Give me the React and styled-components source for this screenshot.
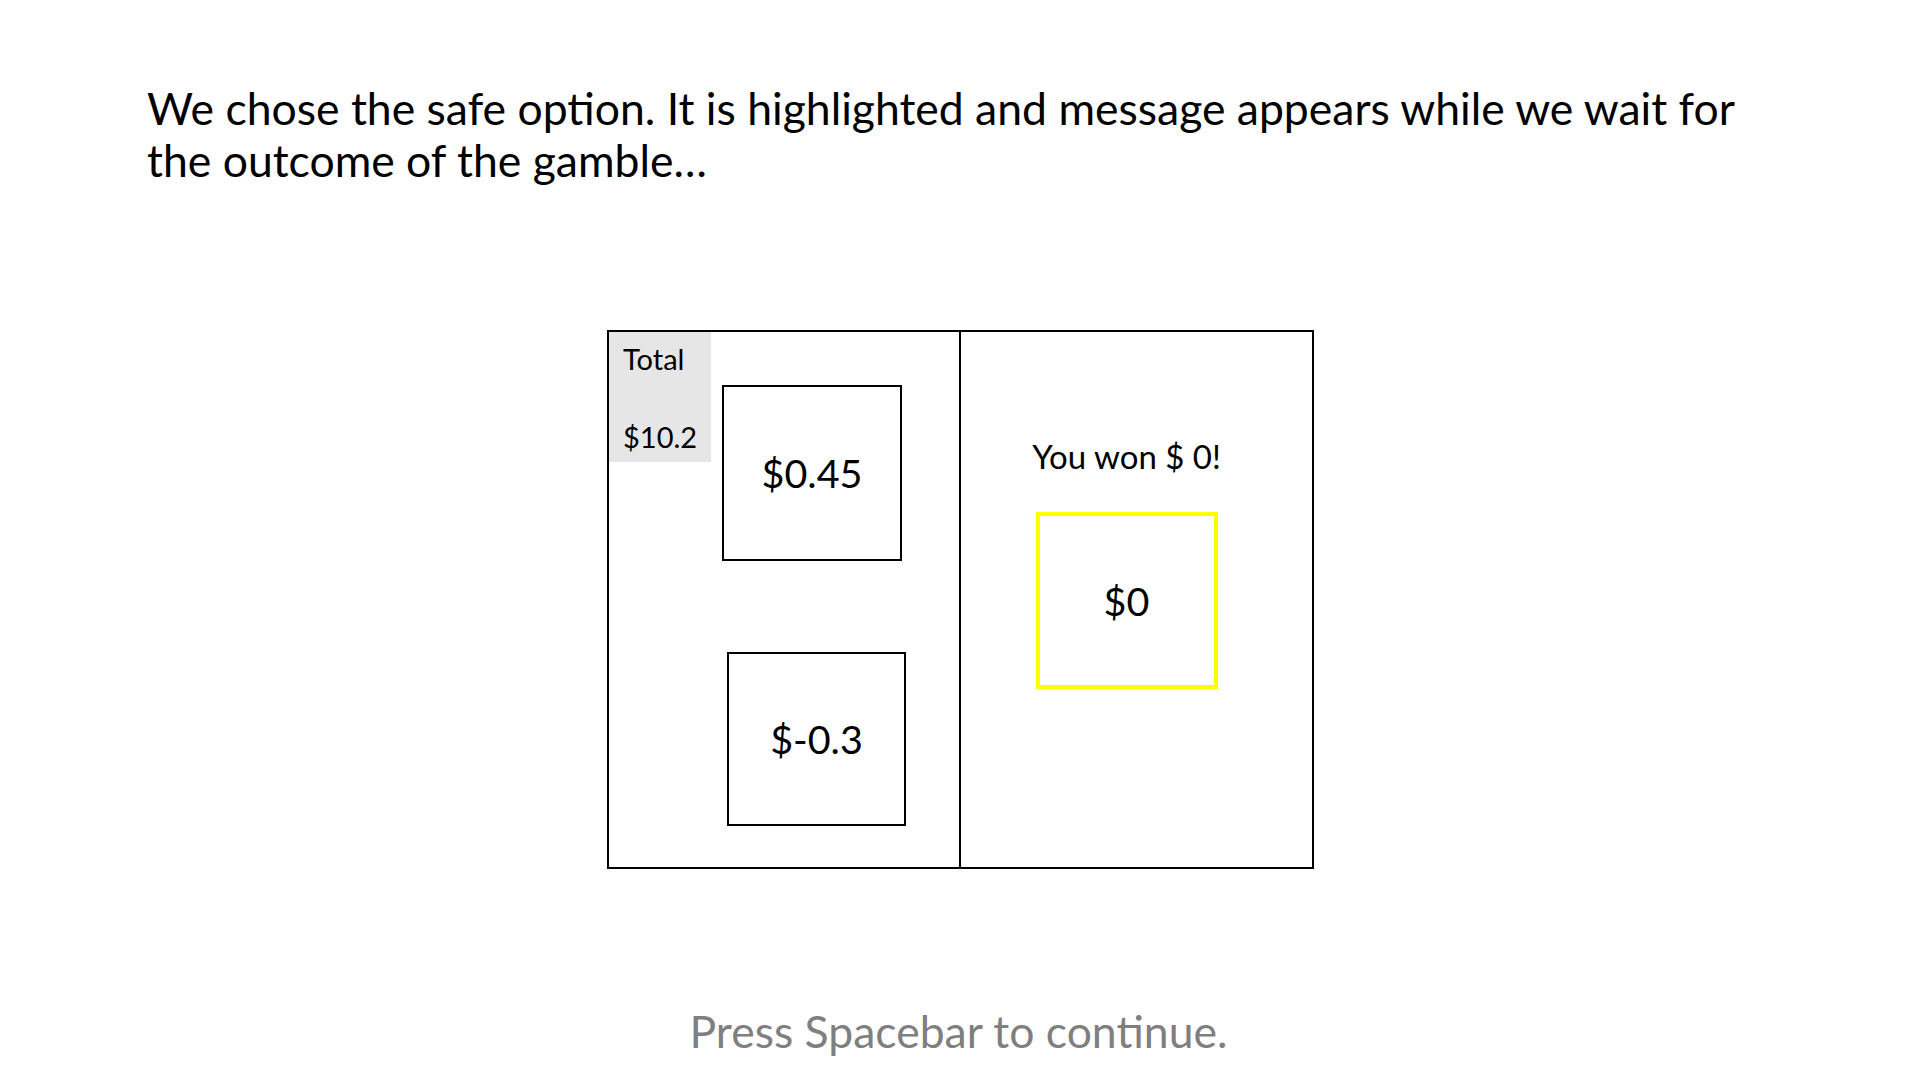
import React from 'react';
import styled, { createGlobalStyle } from 'styled-components';

const GlobalStyle = createGlobalStyle`
    html, body {
        margin: 0;
        padding: 0;
        background: #ffffff;
    }
    body {
        font-family: Lato, "Open Sans", sans-serif;
        color: #000000;
    }
`;

const Slide = styled.div`
    width: 1917px;
    height: 1072px;
    box-sizing: border-box;
    padding-top: 82px;
    overflow: hidden;
`;

const Caption = styled.p`
    margin: 0 0 0 147px;
    width: 1640px;
    font-size: 44.5px;
    line-height: 52px;
`;

const Board = styled.div`
    display: grid;
    grid-template-columns: 352px 351px;
    width: 707px;
    height: 539px;
    box-sizing: border-box;
    margin: 144px 0 0 607px;
    border: 2px solid #000000;
`;

const LeftCell = styled.div`
    display: flex;
    flex-direction: column;
    border-right: 2px solid #000000;
`;

const TopRow = styled.div`
    display: flex;
    align-items: flex-start;
`;

const TotalBox = styled.div`
    width: 102px;
    height: 130px;
    box-sizing: border-box;
    padding: 11px 0 0 14px;
    background: #e7e6e6;
    font-size: 29px;
`;

const TotalLine = styled.div`
    line-height: 31px;
    margin-top: ${p => p.$gap || 0}px;
`;

const Option = styled.div`
    display: flex;
    align-items: center;
    justify-content: center;
    width: ${p => p.$w}px;
    height: ${p => p.$h}px;
    box-sizing: border-box;
    margin: ${p => p.$top}px 0 0 ${p => p.$left}px;
    border: ${p => (p.$chosen ? '4px solid #ffff00' : '2px solid #000000')};
    font-size: 39.5px;
    line-height: 1.2;
`;

const RightCell = styled.div`
    display: flex;
    flex-direction: column;
    align-items: center;
    padding: 105px 20px 0 0;
`;

const Result = styled.div`
    font-size: 33px;
    line-height: 38px;
    margin-bottom: 37px;
`;

const Footer = styled.p`
    margin: 135px 0 0 0;
    text-align: center;
    font-size: 44.5px;
    line-height: 53px;
    color: #7f7f7f;
`;

const App = () => {
    return (
        <>
            <GlobalStyle />
            <Slide>
                <Caption>
                    We chose the safe option. It is highlighted and message appears while we wait for the outcome of the gamble…
                </Caption>
                <Board>
                    <LeftCell>
                        <TopRow>
                            <TotalBox>
                                <TotalLine>Total</TotalLine>
                                <TotalLine $gap={47}>$10.2</TotalLine>
                            </TotalBox>
                            <Option $w={180} $h={176} $top={53} $left={11}>$0.45</Option>
                        </TopRow>
                        <Option $w={179} $h={174} $top={91} $left={118}>$-0.3</Option>
                    </LeftCell>
                    <RightCell>
                        <Result>You won $ 0!</Result>
                        <Option $w={182} $h={177} $top={0} $left={0} $chosen>$0</Option>
                    </RightCell>
                </Board>
                <Footer>Press Spacebar to continue.</Footer>
            </Slide>
        </>
    );
};

export default App;
